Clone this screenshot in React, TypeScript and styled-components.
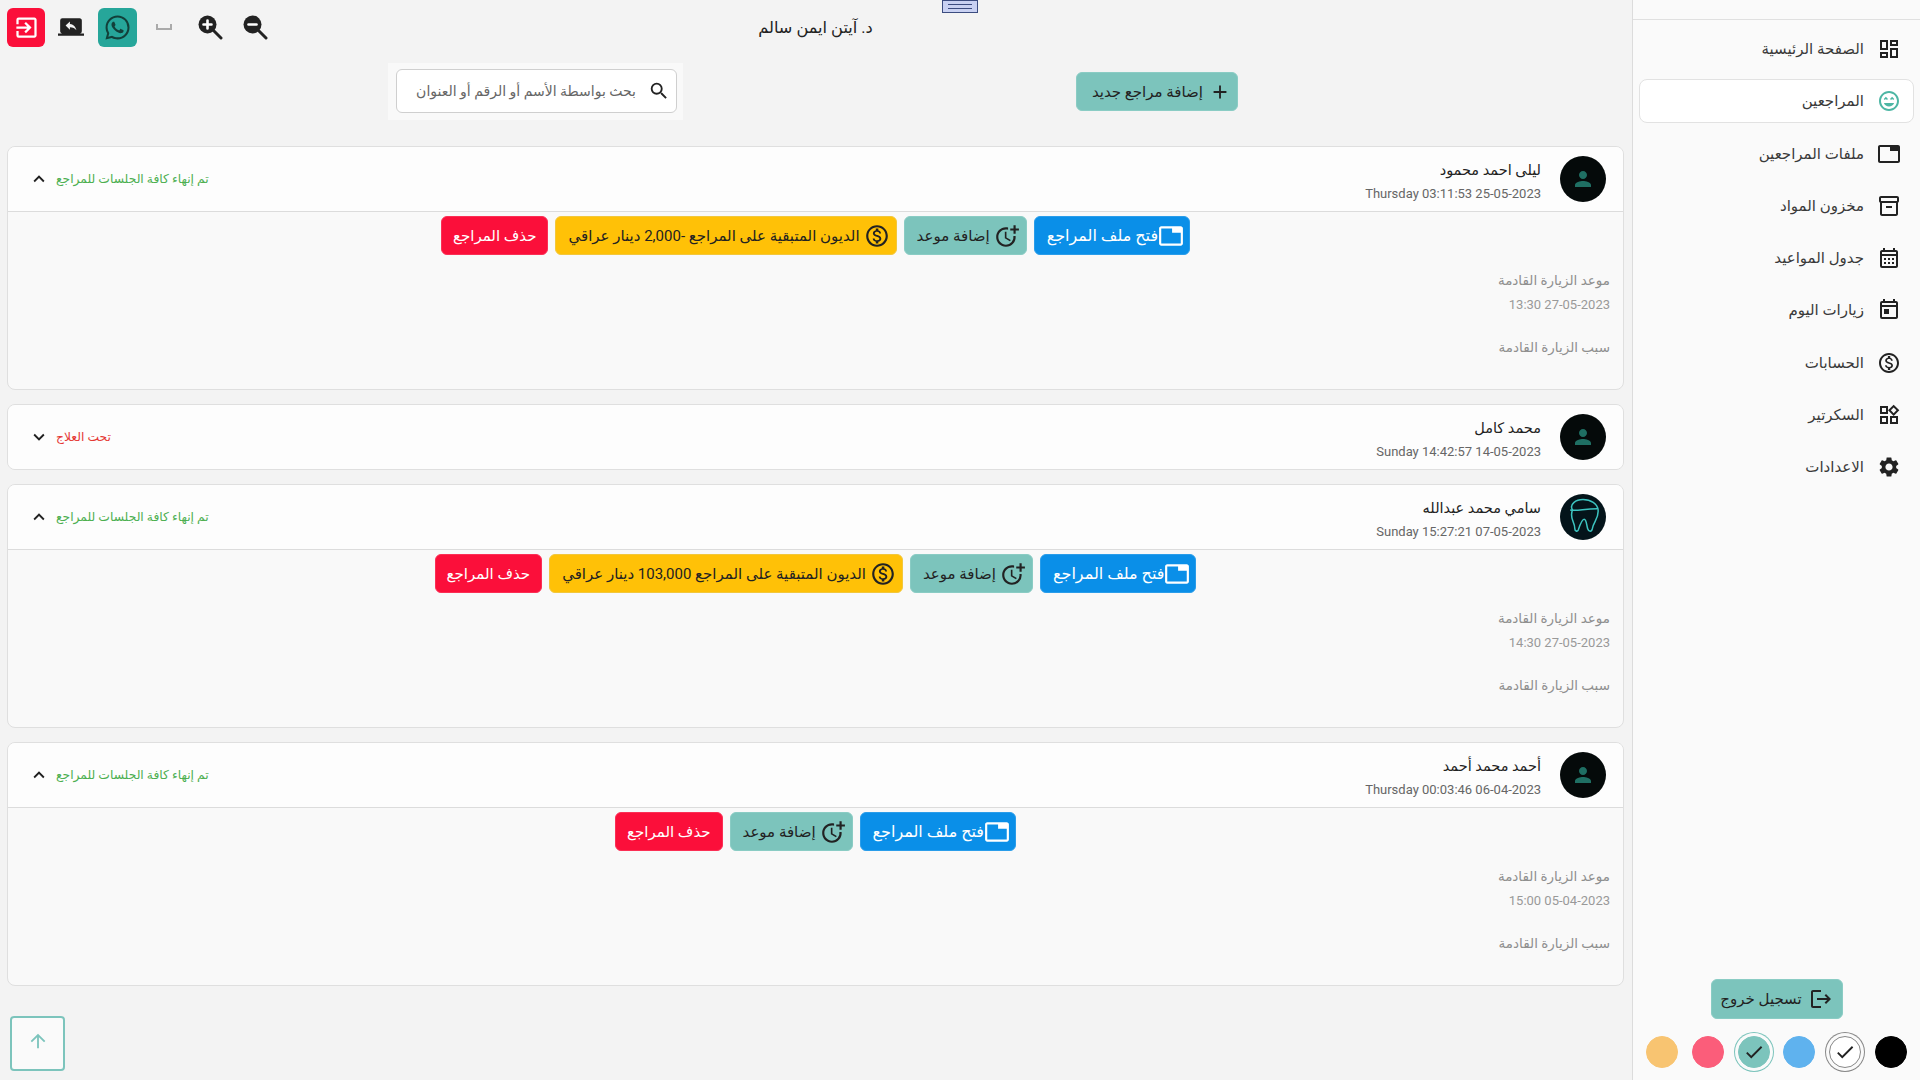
import React from 'react';
import styled, { createGlobalStyle } from 'styled-components';
import {
  MdAdd, MdArrowUpward, MdCheck, MdExitToApp, MdExpandLess, MdExpandMore, MdLogout, MdOutlineCalendarMonth,
  MdOutlineDashboard, MdOutlineInventory2, MdOutlineMonetizationOn, MdOutlineMoreTime,
  MdOutlineSentimentVerySatisfied, MdOutlineTab, MdOutlineToday, MdOutlineWidgets, MdPerson, MdScreenShare, MdSearch,
  MdSettings, MdSpaceBar, MdWhatsapp,
} from 'react-icons/md';

const Global = createGlobalStyle`
  html, body { margin: 0; padding: 0; height: 100%; overflow: hidden; }
  body { background: #f3f3f3; font-family: Roboto, "Noto Sans", "DejaVu Sans", sans-serif; color: #222; }
  * { box-sizing: border-box; }
`;

const Shell = styled.div`
  position: relative;
  display: flex;
  width: 1920px;
  height: 1080px;
  overflow: hidden;
`;
const Grip = styled.div`
  position: absolute;
  top: 0;
  left: 942px;
  width: 36px;
  height: 13px;
  background: #c9d1f2;
  border: 1px solid #3c4c80;
  display: flex;
  align-items: center;
  justify-content: center;
  &::before {
    content: '';
    width: 24px;
    height: 3px;
    border-top: 1px solid #3c4c80;
    border-bottom: 1px solid #3c4c80;
  }
`;
const Sidebar = styled.aside`
  width: 288px;
  flex: none;
  background: #fafafa;
  border-left: 1px solid #dcdcdc;
  display: flex;
  flex-direction: column;
`;
const SideTop = styled.div`
  height: 20px;
  border-bottom: 1px solid #e0e0e0;
  flex: none;
`;
const Nav = styled.nav`
  display: flex;
  flex-direction: column;
  padding: 7px 6px 0 6px;
`;
const NavItem = styled.div<{ $active?: boolean }>`
  height: 44px;
  margin-bottom: 8.3px;
  display: flex;
  align-items: center;
  gap: 13px;
  padding-right: 12px;
  font-size: 15px;
  color: #3a3a3a;
  border-radius: 8px;
  border: 1px solid ${p => (p.$active ? '#e2e2e2' : 'transparent')};
  background: ${p => (p.$active ? '#fff' : 'transparent')};
  svg { font-size: 24px; flex: none; color: ${p => (p.$active ? '#4db6a4' : '#222')}; }
`;
const SideBottom = styled.div`
  margin-top: auto;
  display: flex;
  flex-direction: column;
  align-items: center;
  padding-bottom: 12px;
`;
const Logout = styled.button`
  width: 132px;
  height: 40px;
  margin: 0 0 17px;
  display: flex;
  align-items: center;
  justify-content: center;
  gap: 7px;
  font: inherit;
  font-size: 15px;
  color: #222;
  background: #7cc4bc;
  border: 1px solid #8accc4;
  border-radius: 6px;
  svg { font-size: 24px; }
`;
const Swatches = styled.div`
  display: flex;
  align-items: center;
  justify-content: center;
  gap: 13.7px;
`;
const Swatch = styled.div<{ $color: string; $on?: string; $edge?: string }>`
  position: relative;
  width: 32px;
  height: 32px;
  border-radius: 50%;
  background: ${p => p.$color};
  border: 1px solid ${p => p.$edge ?? p.$color};
  display: flex;
  align-items: center;
  justify-content: center;
  color: #222;
  font-size: 22px;
  ${p => (p.$on ? `box-shadow: 0 0 0 3px #fafafa, 0 0 0 4px ${p.$on};` : '')}
`;

const Main = styled.main`
  flex: 1;
  min-width: 0;
  display: flex;
  flex-direction: column;
  padding: 0 8px 0 7px;
`;
const TopBar = styled.header`
  height: 54px;
  flex: none;
  display: grid;
  grid-template-columns: 1fr auto 1fr;
  align-items: center;
`;
const Title = styled.h1`
  margin: 0;
  font-size: 16.2px;
  font-weight: 400;
  color: #222;
`;
const Tools = styled.div`
  grid-column: 3;
  justify-self: end;
  display: flex;
  flex-direction: row-reverse;
  align-items: center;
  height: 39px;
`;
const SquareBtn = styled.div<{ $bg: string }>`
  height: 39px;
  border-radius: 6px;
  background: ${p => p.$bg};
  display: flex;
  align-items: center;
  justify-content: center;
`;
const RedBtn = styled(SquareBtn)`width: 38px; color: #fff; font-size: 27px;`;
const GreenBtn = styled(SquareBtn)`width: 39px; color: #12403a; font-size: 29px;`;
const ToolIcon = styled.div<{ $w: number; $size: number; $color?: string; $flip?: boolean }>`
  width: ${p => p.$w}px;
  display: flex;
  align-items: center;
  justify-content: center;
  font-size: ${p => p.$size}px;
  color: ${p => p.$color ?? '#222'};
  ${p => (p.$flip ? 'transform: scaleX(-1);' : '')}
`;
const ActionRow = styled.div`
  height: 92px;
  flex: none;
  display: flex;
  align-items: flex-start;
  padding: 9px 386px 0 0;
`;
const AddBtn = styled.button`
  width: 162px;
  height: 39px;
  margin-top: 9px;
  padding: 0 6px 0 0;
  display: flex;
  align-items: center;
  gap: 6px;
  font: inherit;
  font-size: 15px;
  color: #222;
  background: #7cc4bc;
  border: 1px solid #8accc4;
  border-radius: 6px;
  svg { font-size: 22px; flex: none; }
`;
const SearchWrap = styled.div`
  margin-right: 393px;
  width: 295px;
  height: 57px;
  padding: 6px 6px 7px 8px;
  background: #f9f9f9;
`;
const SearchBox = styled.div`
  height: 100%;
  background: #fff;
  border: 1px solid #cfcfcf;
  border-radius: 6px;
  display: flex;
  align-items: center;
  gap: 12px;
  padding-right: 6px;
  font-size: 14px;
  color: #666;
  svg { font-size: 22px; color: #222; flex: none; }
`;
const List = styled.div`
  display: flex;
  flex-direction: column;
  gap: 14px;
`;
const Card = styled.section`
  background: #f9f9f9;
  border: 1px solid #dfdfdf;
  border-radius: 8px;
  overflow: hidden;
`;
const CardHead = styled.div<{ $open: boolean }>`
  height: ${p => (p.$open ? 65 : 64)}px;
  display: flex;
  align-items: center;
  background: #fdfdfd;
  padding: 0 17px 0 20px;
  ${p => (p.$open ? 'border-bottom: 1px solid #dcdcdc;' : '')}
`;
const Avatar = styled.div`
  width: 46px;
  height: 46px;
  border-radius: 50%;
  background: #050a0a;
  color: #1f6f63;
  font-size: 24px;
  flex: none;
  display: flex;
  align-items: center;
  justify-content: center;
`;
const ToothAvatar = styled(Avatar)`background: #04141a;`;
const Who = styled.div`
  margin: 6px 19px 0 0;
  display: flex;
  flex-direction: column;
  gap: 4px;
`;
const Name = styled.div`
  font-size: 14.5px;
  line-height: 20px;
  color: #222;
`;
const Stamp = styled.div`
  font-size: 13px;
  line-height: 18px;
  color: #666;
  text-align: right;
`;
const Status = styled.div<{ $color: string }>`
  margin-right: auto;
  display: flex;
  align-items: center;
  gap: 6px;
  font-size: 12.3px;
  color: ${p => p.$color};
`;
const Chevron = styled.span`
  display: flex;
  font-size: 22px;
  color: #222;
`;
const CardBody = styled.div`
  height: 177px;
  padding: 4px 13px 0;
`;
const Buttons = styled.div`
  display: flex;
  justify-content: center;
  gap: 7px;
  height: 39px;
  margin-bottom: 13px;
`;
const Btn = styled.button<{ $bg: string; $fg: string; $bd: string }>`
  height: 39px;
  padding: 0 6px 0 12px;
  display: flex;
  align-items: center;
  gap: 4px;
  font: inherit;
  font-size: 15px;
  white-space: nowrap;
  color: ${p => p.$fg};
  background: ${p => p.$bg};
  border: 1px solid ${p => p.$bd};
  border-radius: 6px;
  svg { font-size: 26px; flex: none; }
`;
const OpenBtn = styled(Btn)`
  padding: 0 5px 0 12px;
  gap: 0;
  font-size: 16px;
`;
const DeleteBtn = styled(Btn)`padding: 0 11px;`;
const Muted = styled.div`
  font-size: 13.5px;
  line-height: 24px;
  color: #8f8f8f;
`;
const MutedDate = styled(Muted)`
  font-size: 13px;
  line-height: 25px;
  text-align: right;
  color: #999;
`;
const MutedLast = styled(Muted)`margin-top: 18px;`;
const UpBtn = styled.div`
  margin: 30px auto 0 3px;
  width: 55px;
  height: 55px;
  border: 2px solid #7cc4bc;
  border-radius: 4px;
  background: #fafafa;
  color: #7cc4bc;
  font-size: 22px;
  display: flex;
  align-items: center;
  justify-content: center;
  padding-bottom: 6px;
`;

const navItems: [string, React.ReactNode][] = [
  ['الصفحة الرئيسية', <MdOutlineDashboard />],
  ['المراجعين', <MdOutlineSentimentVerySatisfied />],
  ['ملفات المراجعين', <MdOutlineTab />],
  ['مخزون المواد', <MdOutlineInventory2 />],
  ['جدول المواعيد', <MdOutlineCalendarMonth />],
  ['زيارات اليوم', <MdOutlineToday />],
  ['الحسابات', <MdOutlineMonetizationOn />],
  ['السكرتير', <MdOutlineWidgets />],
  ['الاعدادات', <MdSettings />],
];

const Tooth = () => (
  <svg width="42" height="42" viewBox="0 0 36 36" fill="none" stroke="#3cc4c0" strokeWidth="1.3">
    <path d="M9 12c-3-5 3-9 9-9 6 0 13 3 13 10 0 7-4 9-5 15-.6 3-3 3-4 0-1-3-1-8-3-8s-4 6-5 9c-1 2-3 1-3-1 0-6-5-9-2-16z" />
    <path d="M7 12c6 1 12-1 23-1" />
  </svg>
);

const Lens = ({ plus }: { plus?: boolean }) => (
  <svg width="26" height="26" viewBox="0 0 26 26">
    <circle cx="10.5" cy="10.5" r="9" fill="#222" />
    <path d="M16 16l8 8" stroke="#222" strokeWidth="3" strokeLinecap="round" />
    <path d={plus ? 'M6.5 10.5h8M10.5 6.5v8' : 'M6.5 10.5h8'} stroke="#fff" strokeWidth="2.6" strokeLinecap="round" />
  </svg>
);

type Patient = { name: string; stamp: string; open: boolean; status: string; color: string; tooth?: boolean; debt?: string; next?: string };
const patients: Patient[] = [
  { name: 'ليلى احمد محمود', stamp: 'Thursday 03:11:53 25-05-2023', open: true, status: 'تم إنهاء كافة الجلسات للمراجع', color: '#4caf50', debt: 'الديون المتبقية على المراجع -2,000 دينار عراقي', next: '13:30 27-05-2023' },
  { name: 'محمد كامل', stamp: 'Sunday 14:42:57 14-05-2023', open: false, status: 'تحت العلاج', color: '#e53935' },
  { name: 'سامي محمد عبدالله', stamp: 'Sunday 15:27:21 07-05-2023', open: true, tooth: true, status: 'تم إنهاء كافة الجلسات للمراجع', color: '#4caf50', debt: 'الديون المتبقية على المراجع 103,000 دينار عراقي', next: '14:30 27-05-2023' },
  { name: 'أحمد محمد أحمد', stamp: 'Thursday 00:03:46 06-04-2023', open: true, status: 'تم إنهاء كافة الجلسات للمراجع', color: '#4caf50', next: '15:00 05-04-2023' },
];

export default function App() {
  return (
    <Shell dir="rtl">
      <Global />
      <Sidebar>
        <SideTop />
        <Nav>
          {navItems.map(([label, icon], i) => (
            <NavItem key={label} $active={i === 1}>{icon}<span>{label}</span></NavItem>
          ))}
        </Nav>
        <SideBottom>
          <Logout><MdLogout />تسجيل خروج</Logout>
          <Swatches>
            <Swatch $color="#000" />
            <Swatch $color="#fff" $edge="#888" $on="#888"><MdCheck /></Swatch>
            <Swatch $color="#5fb2ee" />
            <Swatch $color="#7cc4bc" $on="#7cc4bc"><MdCheck /></Swatch>
            <Swatch $color="#fb5d7a" />
            <Swatch $color="#f8c471" />
          </Swatches>
        </SideBottom>
      </Sidebar>
      <Main>
        <TopBar>
          <span />
          <Title>د. آيتن ايمن سالم</Title>
          <Tools>
            <RedBtn $bg="#fb0f3a"><MdExitToApp /></RedBtn>
            <ToolIcon $w={53} $size={26} $flip><MdScreenShare /></ToolIcon>
            <GreenBtn $bg="#26a69a"><MdWhatsapp /></GreenBtn>
            <ToolIcon $w={54} $size={24} $color="#aaa"><MdSpaceBar /></ToolIcon>
            <ToolIcon $w={38} $size={26}><Lens plus /></ToolIcon>
            <ToolIcon $w={52} $size={26}><Lens /></ToolIcon>
          </Tools>
        </TopBar>
        <ActionRow>
          <AddBtn><MdAdd />إضافة مراجع جديد</AddBtn>
          <SearchWrap>
            <SearchBox><MdSearch />بحث بواسطة الأسم أو الرقم أو العنوان</SearchBox>
          </SearchWrap>
        </ActionRow>
        <List>
          {patients.map(p => (
            <Card key={p.name}>
              <CardHead $open={p.open}>
                {p.tooth ? <ToothAvatar><Tooth /></ToothAvatar> : <Avatar><MdPerson /></Avatar>}
                <Who>
                  <Name>{p.name}</Name>
                  <Stamp dir="ltr">{p.stamp}</Stamp>
                </Who>
                <Status $color={p.color}>
                  {p.status}
                  <Chevron>{p.open ? <MdExpandLess /> : <MdExpandMore />}</Chevron>
                </Status>
              </CardHead>
              {p.open && (
                <CardBody>
                  <Buttons>
                    <OpenBtn $bg="#0a8fe8" $fg="#fff" $bd="#2a9dea"><MdOutlineTab />فتح ملف المراجع</OpenBtn>
                    <Btn $bg="#7cc4bc" $fg="#222" $bd="#8accc4"><MdOutlineMoreTime />إضافة موعد</Btn>
                    {p.debt && <Btn $bg="#ffc107" $fg="#222" $bd="#f2c73c"><MdOutlineMonetizationOn />{p.debt}</Btn>}
                    <DeleteBtn $bg="#fb0f3a" $fg="#fff" $bd="#fb2f55">حذف المراجع</DeleteBtn>
                  </Buttons>
                  <Muted>موعد الزيارة القادمة</Muted>
                  <MutedDate dir="ltr">{p.next}</MutedDate>
                  <MutedLast>سبب الزيارة القادمة</MutedLast>
                </CardBody>
              )}
            </Card>
          ))}
        </List>
        <UpBtn><MdArrowUpward /></UpBtn>
      </Main>
      <Grip />
    </Shell>
  );
}
